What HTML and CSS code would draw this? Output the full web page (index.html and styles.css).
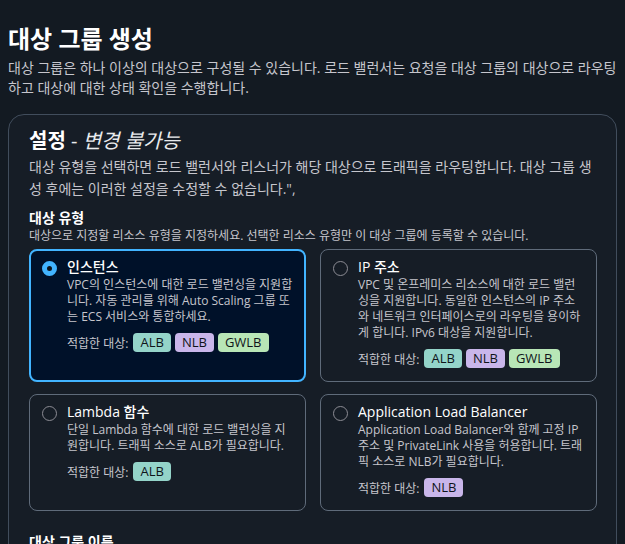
FILE: index.html
```html
<!DOCTYPE html>
<html lang="ko">
<head>
<meta charset="utf-8">
<link rel="stylesheet" href="styles.css">
</head>
<body>
<h1 class="page-title">대상 그룹 생성</h1>
<p class="page-desc">대상 그룹은 하나 이상의 대상으로 구성될 수 있습니다. 로드 밸런서는 요청을 대상 그룹의 대상으로 라우팅하고 대상에 대한 상태 확인을 수행합니다.</p>
<section class="card">
  <h2 class="card-title">설정 <span class="card-title-sub">- <em>변경 불가능</em></span></h2>
  <p class="card-desc">대상 유형을 선택하면 로드 밸런서와 리스너가 해당 대상으로 트래픽을 라우팅합니다. 대상 그룹 생성 후에는 이러한 설정을 수정할 수 없습니다.",</p>
  <h3 class="field-label">대상 유형</h3>
  <p class="field-desc">대상으로 지정할 리소스 유형을 지정하세요. 선택한 리소스 유형만 이 대상 그룹에 등록할 수 있습니다.</p>
  <div class="tiles">
    <div class="tile selected">
      <span class="radio checked"></span>
      <div class="tile-body">
        <div class="tile-title">인스턴스</div>
        <div class="tile-desc">VPC의 인스턴스에 대한 로드 밸런싱을 지원합니다. 자동 관리를 위해 Auto Scaling 그룹 또는 ECS 서비스와 통합하세요.</div>
        <div class="compat"><span class="compat-label">적합한 대상:</span><span class="badge alb">ALB</span><span class="badge nlb">NLB</span><span class="badge gwlb">GWLB</span></div>
      </div>
    </div>
    <div class="tile">
      <span class="radio"></span>
      <div class="tile-body">
        <div class="tile-title">IP 주소</div>
        <div class="tile-desc">VPC 및 온프레미스 리소스에 대한 로드 밸런싱을 지원합니다. 동일한 인스턴스의 IP 주소와 네트워크 인터페이스로의 라우팅을 용이하게 합니다. IPv6 대상을 지원합니다.</div>
        <div class="compat"><span class="compat-label">적합한 대상:</span><span class="badge alb">ALB</span><span class="badge nlb">NLB</span><span class="badge gwlb">GWLB</span></div>
      </div>
    </div>
    <div class="tile">
      <span class="radio"></span>
      <div class="tile-body">
        <div class="tile-title">Lambda 함수</div>
        <div class="tile-desc">단일 Lambda 함수에 대한 로드 밸런싱을 지원합니다. 트래픽 소스로 ALB가 필요합니다.</div>
        <div class="compat"><span class="compat-label">적합한 대상:</span><span class="badge alb">ALB</span></div>
      </div>
    </div>
    <div class="tile">
      <span class="radio"></span>
      <div class="tile-body">
        <div class="tile-title">Application Load Balancer</div>
        <div class="tile-desc">Application Load Balancer와 함께 고정 IP 주소 및 PrivateLink 사용을 허용합니다. 트래픽 소스로 NLB가 필요합니다.</div>
        <div class="compat"><span class="compat-label">적합한 대상:</span><span class="badge nlb">NLB</span></div>
      </div>
    </div>
  </div>
  <h3 class="field-label next">대상 그룹 이름</h3>
</section>
</body>
</html>
```
FILE: styles.css
```css
html, body {
  margin: 0;
  background: #131a22;
}
body {
  padding: 8px;
  font-family: "Open Sans", "Noto Sans CJK KR", sans-serif;
  color: #c6c6cd;
  height: 528px;
  overflow: hidden;
}
.page-title {
  margin: 16px 0 4px;
  font-size: 24px;
  line-height: 30px;
  font-weight: 700;
  color: #ffffff;
}
.page-desc {
  margin: 0;
  font-size: 14px;
  line-height: 20px;
  color: #c6c6cd;
}
.card {
  margin-top: 16px;
  background: #161d26;
  border: 1px solid #414d5c;
  border-radius: 16px;
  padding: 12px 19px 12px 20px;
}
.card-title {
  margin: 0;
  font-size: 20px;
  line-height: 28px;
  font-weight: 700;
  color: #ffffff;
}
.card-title-sub {
  font-weight: 400;
  color: #e9ebed;
}
.card-title-sub em {
  font-style: italic;
}
.card-desc {
  margin: 1px 0 0;
  font-size: 14px;
  line-height: 22px;
  color: #c6c6cd;
}
.field-label {
  margin: 8px 0 0;
  font-size: 14px;
  line-height: 20px;
  font-weight: 700;
  color: #ffffff;
}
.field-desc {
  margin: 0;
  font-size: 12px;
  line-height: 16px;
  color: #c6c6cd;
}
.tiles {
  margin-top: 5px;
  display: grid;
  grid-template-columns: 1fr 1fr;
  gap: 12px 14px;
}
.tile {
  display: flex;
  align-items: flex-start;
  gap: 10px;
  border: 1px solid #5f6b7a;
  border-radius: 8px;
  padding: 7px 12px 13px;
}
.tile.selected {
  border: 2px solid #42b4ff;
  background: #001129;
  padding: 6px 11px 12px;
}
.radio {
  flex: none;
  box-sizing: border-box;
  width: 15px;
  height: 15px;
  margin-top: 4px;
  border-radius: 50%;
  border: 1.5px solid #8c8c94;
}
.radio.checked {
  border: 5px solid #42b4ff;
  background: #0f141a;
}
.tile-body {
  flex: 1;
  min-width: 0;
}
.tile-title {
  font-size: 14px;
  line-height: 20px;
  font-weight: 500;
  color: #ffffff;
}
.tile-desc {
  font-size: 12px;
  line-height: 16px;
  color: #c6c6cd;
}
.compat {
  margin-top: 8px;
  display: flex;
  align-items: center;
  gap: 4px;
  font-size: 12px;
}
.compat-label {
  margin-right: 1px;
  color: #c6c6cd;
}
.badge {
  display: inline-block;
  padding: 0 7px;
  height: 19px;
  line-height: 19px;
  border-radius: 4px;
  font-size: 13px;
  color: #0f141a;
}
.badge.alb { background: #94d4c9; }
.badge.nlb { background: #c9b6ea; }
.badge.gwlb { background: #b8e6b6; }
.field-label.next {
  margin-top: 21px;
}
```
